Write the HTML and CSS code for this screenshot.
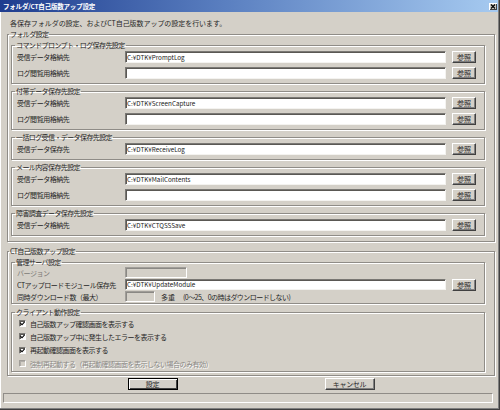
FILE: index.html
```html
<!DOCTYPE html>
<html lang="ja">
<head>
<meta charset="utf-8">
<title>フォルダ/CT自己版数アップ設定</title>
<link rel="stylesheet" href="styles.css">
</head>
<body>
<div class="window">
  <div class="titlebar">
    <span class="title">フォルダ/CT自己版数アップ設定</span>
    <span class="close"><svg width="6" height="5" viewBox="0 0 6 5"><path d="M1 0.5 L5 4.5 M5 0.5 L1 4.5" stroke="#000" stroke-width="1.2" fill="none"/></svg></span>
  </div>
  <div class="client">
    <p class="desc">各保存フォルダの設定、およびCT自己版数アップの設定を行います。</p>

    <fieldset class="group outer first">
      <legend>フォルダ設定</legend>

      <fieldset class="group sub">
        <legend>コマンドプロンプト・ログ保存先設定</legend>
        <div class="row"><span class="lbl">受信データ格納先</span><input class="field" type="text" value="C:¥DTK¥PromptLog"><button class="btn">参照</button></div>
        <div class="row"><span class="lbl">ログ閲覧用格納先</span><input class="field" type="text" value=""><button class="btn">参照</button></div>
      </fieldset>

      <fieldset class="group sub">
        <legend>付帯データ保存先設定</legend>
        <div class="row"><span class="lbl">受信データ格納先</span><input class="field" type="text" value="C:¥DTK¥ScreenCapture"><button class="btn">参照</button></div>
        <div class="row"><span class="lbl">ログ閲覧用格納先</span><input class="field" type="text" value=""><button class="btn">参照</button></div>
      </fieldset>

      <fieldset class="group sub">
        <legend>一括ログ受信・データ保存先設定</legend>
        <div class="row"><span class="lbl">受信データ保存先</span><input class="field" type="text" value="C:¥DTK¥ReceiveLog"><button class="btn">参照</button></div>
      </fieldset>

      <fieldset class="group sub">
        <legend>メール内容保存先設定</legend>
        <div class="row"><span class="lbl">受信データ格納先</span><input class="field" type="text" value="C:¥DTK¥MailContents"><button class="btn">参照</button></div>
        <div class="row"><span class="lbl">ログ閲覧用格納先</span><input class="field" type="text" value=""><button class="btn">参照</button></div>
      </fieldset>

      <fieldset class="group sub">
        <legend>障害調査データ保存先設定</legend>
        <div class="row"><span class="lbl">受信データ格納先</span><input class="field" type="text" value="C:¥DTK¥CTQSSSave"><button class="btn">参照</button></div>
      </fieldset>
    </fieldset>

    <fieldset class="group outer second">
      <legend>CT自己版数アップ設定</legend>

      <fieldset class="group sub server">
        <legend>管理サーバ設定</legend>
        <div class="row tight"><span class="lbl disabled-plain">バージョン</span><input class="field short grayed" type="text" value="" disabled></div>
        <div class="row tight"><span class="lbl">CTアップロードモジュール保存先</span><input class="field" type="text" value="C:¥DTK¥UpdateModule"><button class="btn">参照</button></div>
        <div class="row tight"><span class="lbl">同時ダウンロード数（最大）</span><input class="field tiny grayed" type="text" value=""><span class="unit">多重</span><span class="hint">(0～25、0の時はダウンロードしない)</span></div>
      </fieldset>

      <fieldset class="group sub client-opts">
        <legend>クライアント動作設定</legend>
        <label class="check"><span class="box"><svg width="5" height="5" viewBox="0 0 5 5"><path d="M0.5 2.2 L2 3.8 L4.6 0.8" stroke="#000" stroke-width="1.1" fill="none"/></svg></span>自己版数アップ確認画面を表示する</label>
        <label class="check"><span class="box"><svg width="5" height="5" viewBox="0 0 5 5"><path d="M0.5 2.2 L2 3.8 L4.6 0.8" stroke="#000" stroke-width="1.1" fill="none"/></svg></span>自己版数アップ中に発生したエラーを表示する</label>
        <label class="check"><span class="box"><svg width="5" height="5" viewBox="0 0 5 5"><path d="M0.5 2.2 L2 3.8 L4.6 0.8" stroke="#000" stroke-width="1.1" fill="none"/></svg></span>再起動確認画面を表示する</label>
        <label class="check disabled"><span class="box off"></span>強制再起動する（再起動確認画面を表示しない場合のみ有効）</label>
      </fieldset>
    </fieldset>

    <div class="actions">
      <button class="btn wide default">設定</button>
      <button class="btn wide">キャンセル</button>
    </div>
  </div>
  <div class="status"></div>
</div>
</body>
</html>
```

FILE: styles.css
```css
* {
  box-sizing: border-box;
}

html, body {
  margin: 0;
  padding: 0;
}

body {
  width: 500px;
  height: 410px;
  overflow: hidden;
  background: #d4d0c8;
  font-family: "Noto Sans CJK JP", "Noto Sans", sans-serif;
  font-size: 7px;
  line-height: 8px;
  color: #262626;
}

.window {
  width: 500px;
  height: 410px;
  background: #d4d0c8;
  display: flex;
  flex-direction: column;
  box-shadow: inset -1px -1px 0 #404040, inset -2px -2px 0 #808080, inset 1px 0 0 #ffffff;
}

/* title bar */
.titlebar {
  height: 12px;
  margin-right: 2px;
  padding: 0 1px 0 3px;
  display: flex;
  align-items: center;
  background: linear-gradient(to right, #1e3c8e 0%, #5a7fc0 45%, #a6caf0 100%);
}

.title {
  flex: 1;
  color: #ffffff;
  font-weight: bold;
  font-size: 6.5px;
  line-height: 12px;
  letter-spacing: -0.2px;
  white-space: nowrap;
}

.close {
  width: 8px;
  height: 7px;
  display: flex;
  align-items: center;
  justify-content: center;
  background: #d4d0c8;
  box-shadow: inset 1px 1px 0 #ffffff, inset -1px -1px 0 #404040;
}

/* client area */
.client {
  padding: 7px 5px 0 7px;
  display: flex;
  flex-direction: column;
}

.desc {
  margin: 0 0 3px 3px;
  height: 8px;
  line-height: 8px;
  letter-spacing: -0.05px;
  white-space: nowrap;
}

/* etched group boxes */
.group {
  margin: 0;
  min-width: 0;
  border: 1px solid #8f8c87;
  box-shadow: inset 1px 1px 0 #ffffff, 1px 1px 0 #ffffff;
}

.group > legend {
  margin-left: -2px;
  padding: 0 1px;
  height: 9px;
  line-height: 9px;
  font-size: 7px;
  letter-spacing: -0.6px;
  white-space: nowrap;
}

.outer {
  padding: 2px 9px 5px 3px;
  display: flex;
  flex-direction: column;
  gap: 3px;
}

.outer.second {
  margin-top: 5px;
  padding-bottom: 3px;
  gap: 4px;
}

.sub {
  padding: 1px 8px 4px 5px;
  display: flex;
  flex-direction: column;
  gap: 4px;
}

.sub.server {
  padding-top: 0;
  padding-bottom: 1px;
  gap: 1px;
}

.sub.client-opts {
  padding-top: 0;
  padding-bottom: 1px;
  gap: 0;
}

/* rows */
.row {
  display: flex;
  align-items: center;
  height: 12px;
}

.row.tight {
  height: 11px;
}

.lbl {
  width: 108px;
  flex: none;
  letter-spacing: -0.45px;
  white-space: nowrap;
  overflow: hidden;
}

.disabled-plain {
  color: #7c7a76;
}

.field {
  flex: 1;
  min-width: 0;
  height: 100%;
  margin: 0;
  padding: 0 1px;
  font-family: "Noto Sans CJK JP", "Noto Sans", sans-serif;
  font-size: 6.3px;
  line-height: 9px;
  color: #1a1a1a;
  background: #ffffff;
  border: 1px solid;
  border-color: #7a7874 #f4f3f0 #f4f3f0 #7a7874;
  box-shadow: inset 1px 1px 0 #5a5854;
  outline: none;
}

.field.short {
  flex: none;
  width: 62px;
}

.field.tiny {
  flex: none;
  width: 30px;
}

.field.grayed {
  background: #d4d0c8;
  border-color: #a09d98 #ffffff #ffffff #a09d98;
  box-shadow: inset 1px 1px 0 #8a8884;
}

.unit {
  margin-left: 6px;
  white-space: nowrap;
}

.hint {
  margin-left: 8px;
  letter-spacing: -0.55px;
  white-space: nowrap;
}

/* buttons */
.btn {
  margin: 0;
  padding: 0;
  font-family: "Noto Sans CJK JP", "Noto Sans", sans-serif;
  font-size: 7px;
  line-height: 8px;
  color: #262626;
  background: #d4d0c8;
  border: 1px solid;
  border-color: #ffffff #404040 #404040 #ffffff;
  box-shadow: inset -1px -1px 0 #808080;
}

.row .btn {
  flex: none;
  width: 24px;
  height: 12px;
  margin-left: 6px;
}

.actions {
  margin-top: 2px;
  display: flex;
  justify-content: center;
  gap: 147px;
}

.btn.wide {
  width: 50px;
  height: 12px;
  letter-spacing: -0.3px;
}

.btn.default {
  border: 1px solid #000000;
  box-shadow: inset 1px 1px 0 #ffffff, inset -1px -1px 0 #404040;
}

/* check boxes */
.check {
  display: flex;
  align-items: center;
  height: 13.3px;
  padding-left: 2px;
  letter-spacing: -0.5px;
  white-space: nowrap;
}

.box {
  width: 7px;
  height: 7px;
  margin-right: 4px;
  flex: none;
  display: flex;
  align-items: center;
  justify-content: center;
  background: #ffffff;
  border: 1px solid;
  border-color: #7a7874 #ffffff #ffffff #7a7874;
  box-shadow: inset 1px 1px 0 #5a5854;
}

.box.off {
  background: #d4d0c8;
  border-color: #a09d98 #ffffff #ffffff #a09d98;
  box-shadow: inset 1px 1px 0 #b0ada8;
}

.check.disabled {
  color: #8a8884;
  text-shadow: 1px 1px 0 #ffffff;
}

/* status bar */
.status {
  margin: 3px 7px 0 3px;
  height: 10px;
  border: 1px solid;
  border-color: #8f8c87 #ffffff #ffffff #8f8c87;
}
```
